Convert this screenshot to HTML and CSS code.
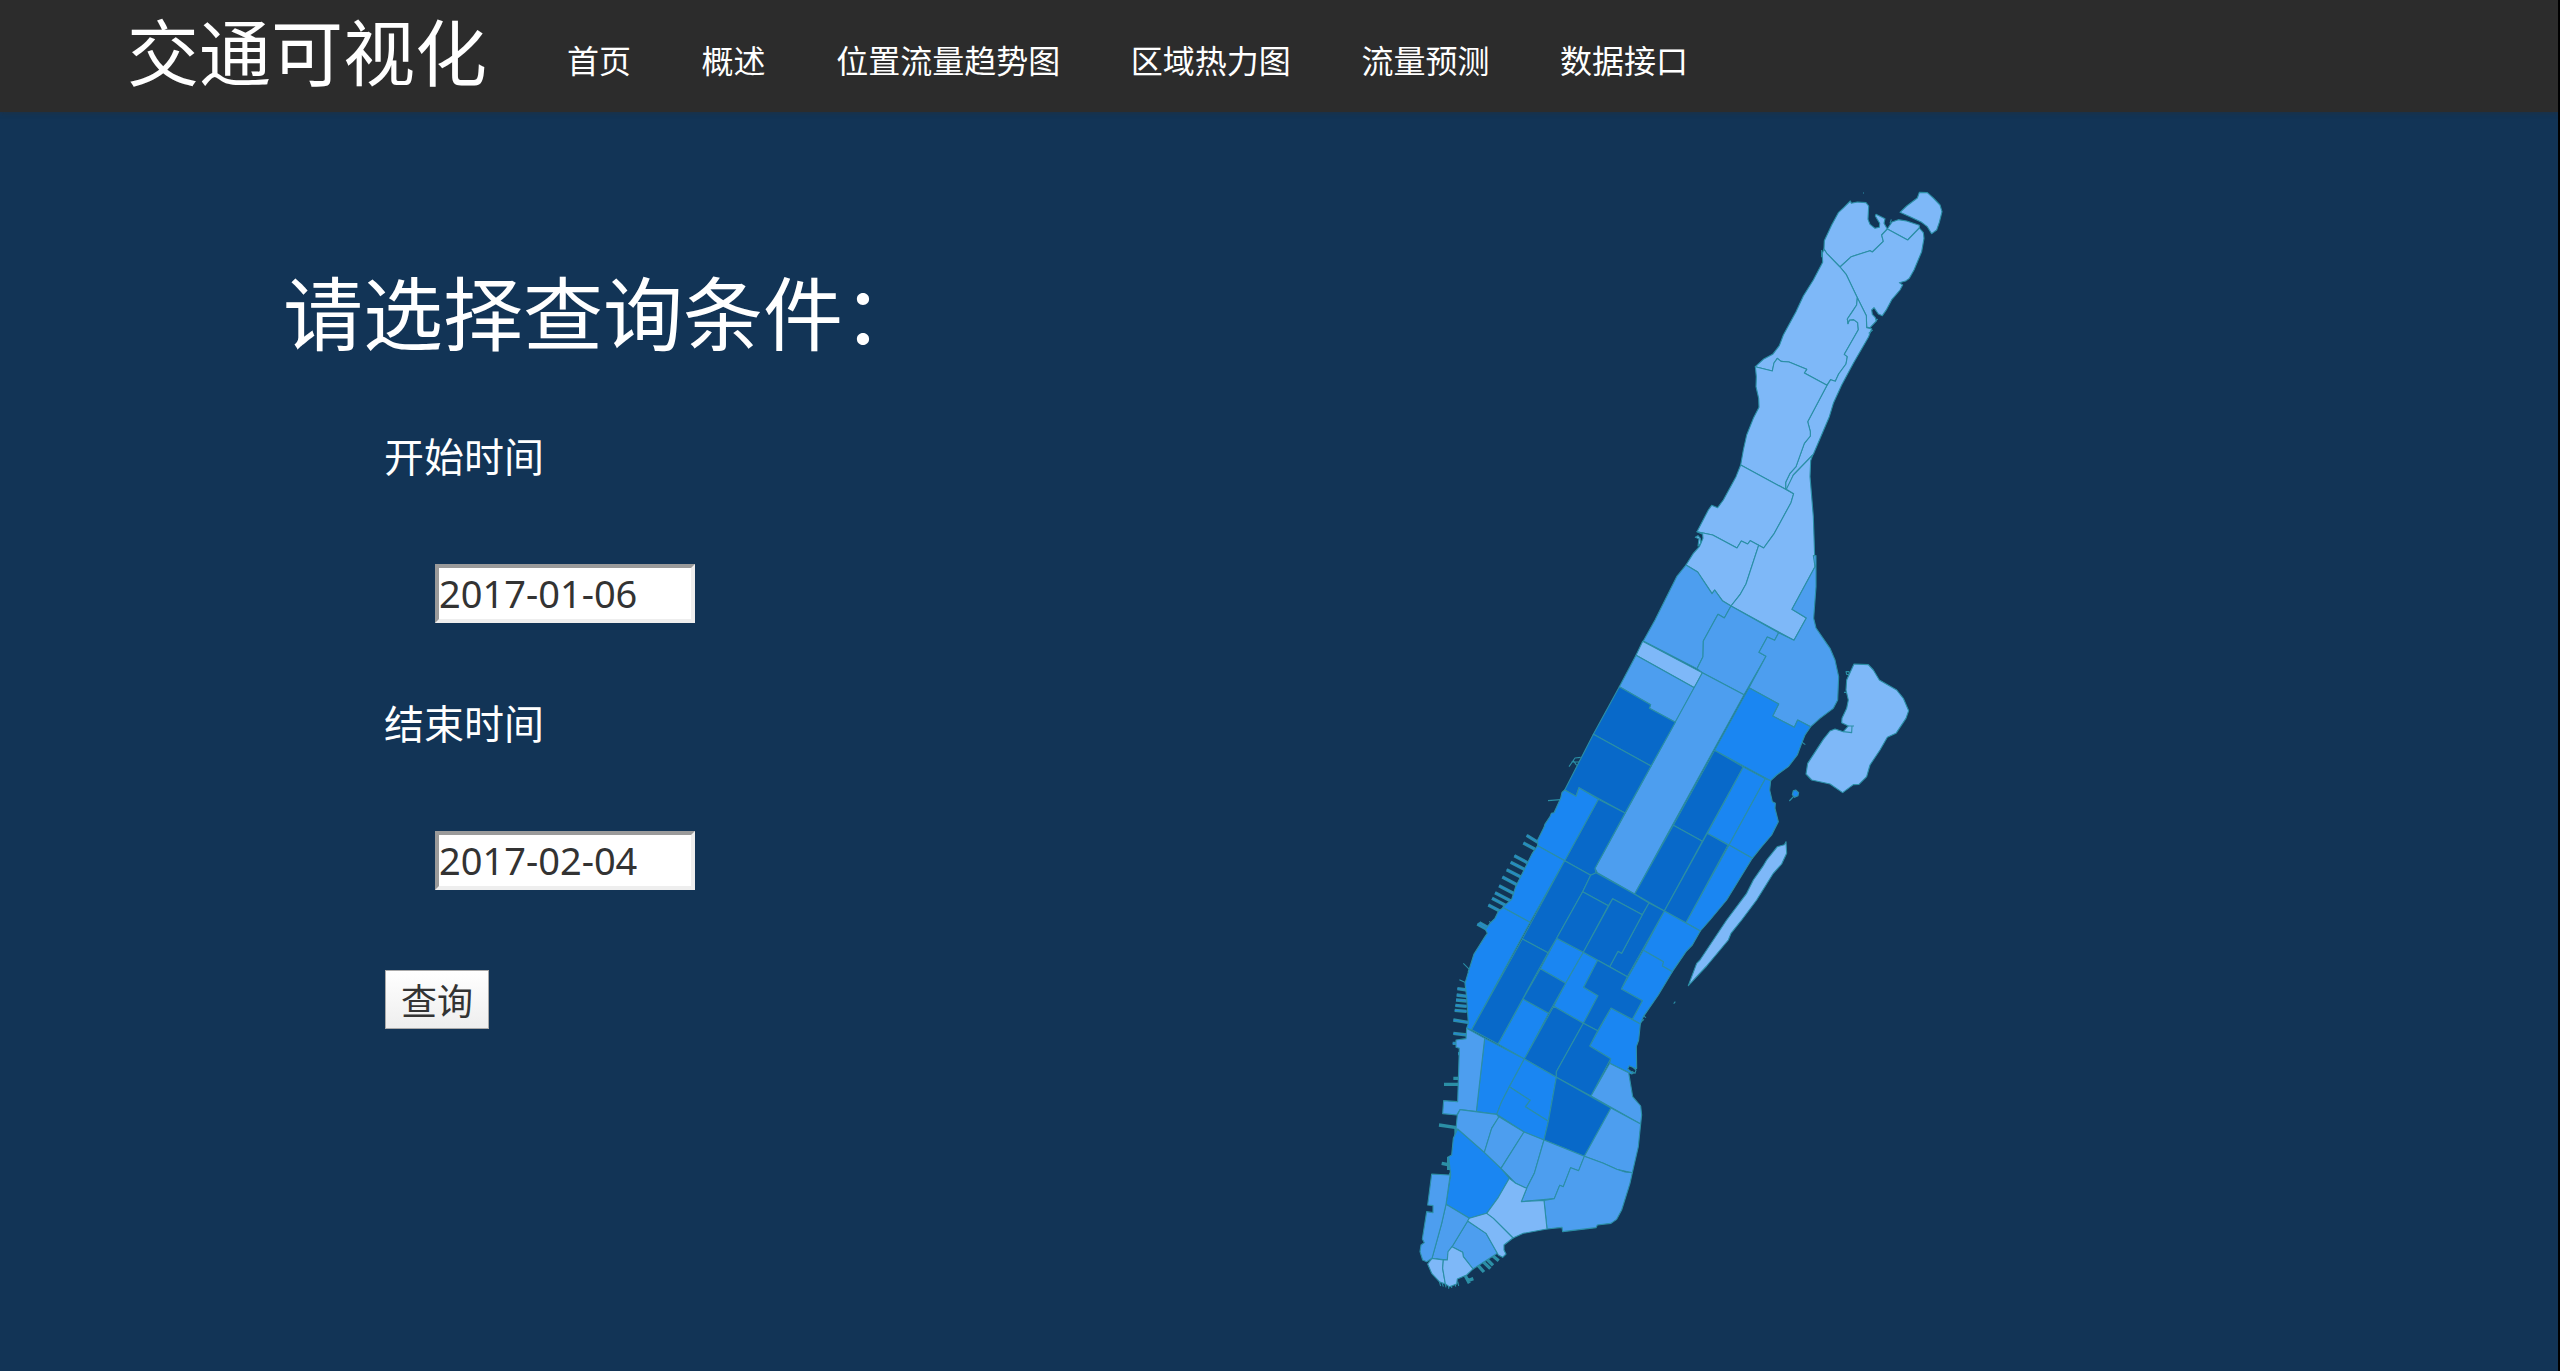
FILE: index.html
```html
<!DOCTYPE html>
<html lang="zh-CN">
<head>
<meta charset="utf-8">
<title>交通可视化</title>
<link rel="stylesheet" href="styles.css">
</head>
<body>
<header class="navbar">
  <a class="brand">交通可视化</a>
  <nav class="nav">
    <a>首页</a><a>概述</a><a>位置流量趋势图</a><a>区域热力图</a><a>流量预测</a><a>数据接口</a>
  </nav>
</header>
<main class="content">
  <form class="query">
    <h1 class="title">请选择查询条件：</h1>
    <label class="label">开始时间</label>
    <div class="field">2017-01-06</div>
    <label class="label">结束时间</label>
    <div class="field">2017-02-04</div>
    <button class="submit" type="button">查询</button>
  </form>
  <svg class="map" viewBox="0 0 1680 3420">
    <!-- west and south piers -->
    <g class="pier-edge" transform="translate(210 1740)"><path id="p1" d="M170 256L204 277M160 279L194 297M133 317L172 338M122 337L167 360M110 359L160 385M97 381L152 410M87 407L140 435M75 428L127 455M66 445L112 469M55 465L88 482M22 522L55 540M28 518L60 536"/></g>
    <g class="pier-fill" transform="translate(210 1740)"><use href="#p1"/></g>
    <g class="pier-edge" transform="translate(120 2130)"><path id="p2" d="M52 326L82 330M50 345L82 349M48 360L80 363M46 376L80 379M44 391L80 394M40 420L88 428M40 460L82 465M38 490L68 490M54 521H68"/></g>
    <g class="pier-fill" transform="translate(120 2130)"><use href="#p2"/></g>
    <g class="pier-edge" transform="translate(0 2670)"><path d="M132 73H178M160 55H180M117 195L170 203M125 310L150 315M232 614L252 636M246 602L271 626M257 594L279 616M272 582L296 602M196 647L208 670M204 662L220 656M146 290V330M168 200V235"/></g>
    <g class="line" transform="translate(0 2670)"><path d="M118 665L122 678M126 668L130 680M136 672L138 682M146 676V686M155 675V684M165 668L167 680M173 665L176 678"/></g>
    <g class="line" transform="translate(420 1410)"><path d="M87 380L105 354L122 352M94 366H118M100 362L110 376M24 482L62 479M785 306L796 314M748 483L762 468M918 95L927 95L928 104L920 103ZM912 157H922"/></g>
    <g class="line" transform="translate(120 2130)"><path d="M70 250L88 268L84 275M58 299L78 308M148 124L156 132M606 405L618 413M601 428L612 418"/></g>
    <!-- northern districts -->
    <g class="light" transform="translate(720 0)">
      <path d="M600 291L560 250L552 237L553 212L575 165L595 128L612 112L631 93L634 100L652 96L678 98L686 108L684 148L690 163L705 175L718 172L719 160L706 138L708 133L735 146L732 160L742 177L725 195L730 214L697 246L690 242L634 260Z"/>
      <path d="M742 177L756 156L775 149L800 153L838 166L838 174L803 210Z"/>
      <path d="M780 127L800 108L832 84L838 67L862 68L880 84L900 105L906 125L898 157L890 180L875 191L862 170L845 157L810 140Z"/>
      <path d="M742 177L803 210L838 174L850 188L852 205L845 245L822 300L808 325L797 333L778 338L788 345L780 360L756 388L740 418L727 437L715 432L702 413L695 420L697 433L706 443L710 452L690 473L680 471L679 437L652 383L619 314L600 291L634 260L690 242L697 246L730 214L725 195Z"/>
      <path d="M552 237L560 250L600 291L619 314L652 383L650 405L635 428L622 447L624 461L628 450L641 449L653 458L655 479L613 553L622 560L618 582L596 612L586 634L572 629L561 646L493 609L500 598L447 576L423 574L412 565L402 579L397 603L346 590L370 568L398 553L418 527L430 495L468 425L490 378L520 330L548 277L547 250Z"/>
      <path d="M652 383L679 437L680 473L695 476L686 500L640 580L605 645L580 700L568 740L520 853L460 915L443 958L437 958V937L450 910L468 890L493 820L511 798V785L503 755L561 646L572 629L586 634L596 612L618 582L622 560L613 553L655 479L653 458L641 449L628 450L624 461L622 447L635 428L650 405Z"/>
      <path d="M346 590L397 603L402 579L412 565L423 574L447 576L500 598L493 609L561 646L503 755L511 785V798L493 820L468 890L450 910L437 937V958L302 885L310 840L320 795L340 745L357 712L356 685L348 650L349 620Z"/>
      <path d="M705 450L714 448M686 490L698 480M750 160L754 148M669 69H672M545 240V262"/>
    </g>
    <g transform="translate(720 690)">
      <g class="light">
        <path d="M302 195L461 281L453 308L403 400L371 444L331 422L323 432L304 423L291 444L218 405L171 395L205 330L215 316L233 323L250 300L288 230Z"/>
        <path d="M171 395L218 405L291 444L304 423L323 432L331 422L356 436L318 552L300 584L273 618L247 602L224 570L216 581L173 516L138 495L160 460L178 440L189 415L188 403Z"/>
        <path d="M518 165L512 182L510 230L520 350L525 500L456 628L499 654L462 721L273 618L300 584L318 552L356 436L371 444L403 400L453 308L461 281L439 268L460 225Z"/>
        <path d="M166 412L174 407L181 415L182 430L174 438L177 416Z"/>
      </g>
      <g class="mid">
        <path d="M138 495L173 516L216 581L224 570L247 602L273 618L253 654L234 643L190 723L189 770L171 806L10 723L45 660L75 600L110 530Z"/>
        <path d="M273 618L416 698L404 721L382 711L357 757L378 769L312 884L187 818L171 806L189 770L190 723L234 643L253 654Z"/>
        <path d="M525 500L456 628L499 654L462 721L416 698L404 721L382 711L357 757L378 769L327 863L416 912L398 948L463 982L473 960L512 980L540 955L580 925L593 900L596 830L585 780L570 745L528 684L521 655L528 560V467H520Z"/>
      </g>
    </g>
    <!-- around the central park -->
    <g transform="translate(420 1410)">
      <path class="light" d="M308 4L487 98L463 143L288 46Z"/>
      <path class="mid" d="M288 46L463 143L406 247L328 205L332 194L238 140Z"/>
      <path class="mid" d="M487 98L612 164L284 762L172 698L165 685Z"/>
      <g class="dark">
        <path d="M238 140L332 194L328 205L406 247L333 378L160 283Z"/>
        <path d="M160 283L333 378L255 519L117 443L108 469L74 450Z"/>
        <path d="M524 331L610 381L487 604L400 556Z"/>
        <path d="M400 556L487 604L373 813L284 762Z"/>
        <path d="M502 580L564 615L438 848L373 813Z"/>
        <path d="M175 478L255 519L165 685L168 700L152 706L74 662Z"/>
      </g>
      <g class="bright">
        <path d="M627 143L716 192L698 228L763 262L773 240L812 260L795 285L785 310L772 345L745 380L710 405L692 422L524 331Z"/>
        <path d="M610 381L676 416L567 615L502 580Z"/>
        <path d="M676 416L692 422L689 450L697 485L706 490L705 505L715 545L695 585L665 620L637 655L567 615Z"/>
        <path d="M567 615L637 655L600 715L560 780L510 840L481 873L438 848Z"/>
        <path d="M74 450L108 469L117 443L175 478L74 662L-7 617V600L12 562L15 552L30 530L34 520L42 518L62 475L66 457Z"/>
        <path d="M760 452L767 450L776 458L774 467L764 472L757 464Z"/>
      </g>
      <path class="light" d="M942 72L985 74L1000 90L1018 120L1070 150L1090 175L1106 212L1098 235L1068 280L1042 292L1020 330L990 375L980 410L957 433L940 434L908 458L870 432L815 420L798 402L803 370L850 298L870 273L885 267L910 275L925 258L905 248L906 235L920 205L925 180L918 150L920 120Z"/>
      <path class="line" d="M910 275L935 278L936 258H925M925 258H942"/>
      <path class="light" d="M738 605L740 640L725 672L700 700L650 780L605 840L573 880L565 900L500 978L445 1037L470 970L480 960L560 840L620 760L640 720L668 680L680 660L712 620L733 614Z"/>
    </g>
    <!-- midtown -->
    <g transform="translate(120 2130)">
      <g class="bright">
        <path d="M293 -103L374 -58L270 127L188 82L215 58L227 20L252 -30L277 -80Z"/>
        <path d="M190 83L270 127L95 449L80 445L85 430L80 350L75 310L90 260L102 222L135 170L142 160L136 148L150 130L165 115L176 92Z"/>
        <path d="M350 175L430 217L377 310L301 266Z"/>
        <path d="M673 93L781 153L757 195L738 215L697 275L667 258L670 245L610 211Z"/>
        <path d="M610 211L670 245L667 258L697 275L655 345L610 410L601 432L577 418L607 362L544 327Z"/>
        <path d="M430 217L473 241L431 322L474 347L430 430L341 379L377 310Z"/>
        <path d="M249 357L326 400L253 537L174 492Z"/>
        <path d="M513 384L601 432L596 480L589 500L590 565H585L568 557L563 567L580 580L575 582L509 550L512 536L449 498Z"/>
      </g>
      <g class="dark">
        <path d="M374 -58L452 -14L428 35L350 175L324 218L247 177Z"/>
        <path d="M247 177L324 218L174 492L95 449Z"/>
        <path d="M452 -14L468 -22L583 42L627 69L607 104L518 56L505 77L428 35Z"/>
        <path d="M627 69L673 93L562 290L509 260L534 214L545 220L607 104Z"/>
        <path d="M428 35L505 77L430 217L350 175Z"/>
        <path d="M518 56L607 104L545 220L534 214L509 260L430 217Z"/>
        <path d="M473 241L562 290L544 327L607 362L577 418L513 384L473 452L430 430L474 347L431 322Z"/>
        <path d="M301 266L377 310L326 400L249 357Z"/>
        <path d="M341 379L430 430L349 575V592L253 537Z"/>
        <path d="M430 430L473 452L449 498L512 536L453 648L349 592V575Z"/>
      </g>
      <path class="line" d="M580 563L588 570L585 580L575 574M701 371L706 365"/>
    </g>
    <!-- downtown -->
    <g transform="translate(0 2670)">
      <g class="bright">
        <path d="M254 -65L373 -3L328 80L305 125L290 163L229 155Z"/>
        <path d="M373 -3L469 52L445 184L376 140L390 121L328 80Z"/>
        <path d="M328 80L390 121L376 140L445 184L432 240L372 216L290 163L305 125Z"/>
        <path d="M173 207L253 277L303 325L328 355L295 412L260 460L208 475L138 433L152 345L146 290L155 285L160 235Z"/>
      </g>
      <path class="dark" d="M469 52L633 144L553 289L432 240L445 184Z"/>
      <g class="mid">
        <path d="M629 10L686 38L698 110L722 138L725 165L722 192L573 108Z"/>
        <path d="M200 -95L254 -65L229 155L180 149L170 165L128 161L131 122L173 125L178 -35L168 -38V-60L198 -64Z"/>
        <path d="M633 144L722 192L715 260L697 338L650 328L610 310L553 289Z"/>
        <path d="M180 149L290 163L297 172L275 205L253 277L173 207H168L172 165Z"/>
        <path d="M297 170L372 216L303 325L253 277L275 205Z"/>
        <path d="M372 216L432 240L403 340L380 385L347 370L303 325Z"/>
        <path d="M432 240L553 289L536 332L512 323L490 380L479 376L463 416L364 425L380 385L403 340Z"/>
        <path d="M553 289L610 310L650 328L675 336L697 338L690 370L665 450L650 478L633 490L592 495L588 503L488 515L486 502L441 507L432 421L463 416L479 376L490 380L512 323L536 332Z"/>
        <path d="M203 483L258 520L292 580L219 627L190 590L188 577L156 560Z"/>
        <path d="M138 433L208 475L203 483L156 560L143 585L142 600L96 595L125 490Z"/>
        <path d="M95 342L147 345L152 335L138 433L125 490L96 595L80 605L68 600L60 575L63 555L73 548L67 537L80 455L99 458V437L83 435Z"/>
      </g>
      <g class="light">
        <path d="M328 355L347 370L380 385L364 425L432 421L441 507L370 520L339 534L280 475L260 460L295 412Z"/>
        <path d="M260 460L280 475L339 534L312 555V570L318 582L308 592L295 585L258 520L203 483L208 475Z"/>
        <path d="M96 595L130 600L128 625L136 672L118 665L95 640L83 612Z"/>
        <path d="M130 600H142L144 575L156 560L188 577L190 590L219 627L200 645L172 657L170 672L148 680L136 672L128 625Z"/>
      </g>
    </g>
  </svg>
</main>
</body>
</html>
```
FILE: styles.css
```css
* { box-sizing: border-box; }
html, body { height: 100%; }
body {
  margin: 0;
  display: flex;
  flex-direction: column;
  overflow: hidden;
  background: #123456;
  border-right: 2px solid #000;
  color: #fff;
  font-family: "Noto Sans CJK SC", sans-serif;
}
.navbar {
  flex: none;
  display: flex;
  height: 112px;
  padding-left: 127px;
  background: #2c2c2c;
  box-shadow: 0 1px 5px rgba(44, 44, 44, .45);
  white-space: nowrap;
}
.brand { width: 440px; font-size: 72px; line-height: 97px; }
.nav { display: flex; gap: 70.6px; font-size: 32px; line-height: 119px; }
.content { flex: 1; display: flex; min-height: 0; }
.query {
  flex: none;
  display: flex;
  flex-direction: column;
  align-items: flex-start;
  width: 1400px;
  padding: 149px 0 0 283px;
}
.title {
  margin: 0 0 78px;
  font-weight: 400;
  font-size: 80px;
  line-height: 96px;
}
.label {
  margin-left: 101px;
  font-size: 40px;
  line-height: 40px;
}
.field {
  width: 260px;
  height: 59px;
  margin: 89px 0 79px 152px;
  border: 4px solid;
  border-color: #9a9a9a #eee #eee #9a9a9a;
  background: #fff;
  color: #333;
  font-family: "Noto Sans", sans-serif;
  font-size: 38px;
  line-height: 51px;
}
.submit {
  width: 104px;
  height: 59px;
  margin: 1px 0 0 102px;
  padding: 0;
  border: 1px solid #aaa;
  background: linear-gradient(#fff, #eee);
  color: #333;
  font: 36px/57px "Noto Sans CJK SC", sans-serif;
}
.map {
  flex: none;
  width: 560px;
  height: 1140px;
  margin-top: 58px;
  stroke: #2b8fa6;
  stroke-width: 3.3;
  stroke-linejoin: round;
}
.light { fill: #7eb8f8; }
.mid { fill: #4d9eef; }
.bright { fill: #1a86f2; }
.dark { fill: #0869c9; }
.line { fill: none; }
.pier-edge { fill: none; stroke-width: 10; }
.pier-fill { fill: none; stroke: #2486d8; stroke-width: 3; }
```
